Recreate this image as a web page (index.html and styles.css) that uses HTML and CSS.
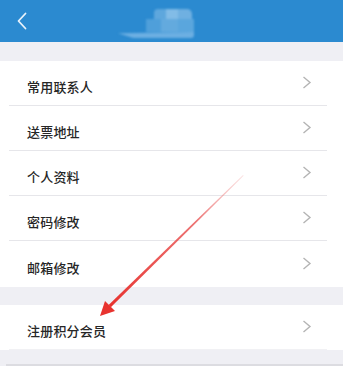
FILE: index.html
```html
<!DOCTYPE html>
<html lang="zh">
<head>
<meta charset="utf-8">
<link rel="stylesheet" href="styles.css">
</head>
<body>
<div class="page">
  <header class="bar">
    <svg class="back" width="12" height="18" viewBox="0 0 12 18"><path d="M9.5 1.5 L2.5 9 L9.5 16.5" fill="none" stroke="#e8f2fb" stroke-width="1.8" stroke-linecap="round" stroke-linejoin="round"/></svg>
    <div class="title-blob">
      <div class="blob-top"><span class="b1"></span><span class="b2"></span><span class="b3"></span></div>
      <div class="blob-mid"><span class="m1"></span><span class="m2"></span><span class="m3"></span></div>
      <div class="blob-base"></div>
    </div>
  </header>

  <div class="group first">
    <div class="row"><span class="label">常用联系人</span><svg class="chev" width="10" height="13" viewBox="0 0 10 13"><path d="M1.5 1 L8 6.5 L1.5 12" fill="none" stroke="#b4b4b4" stroke-width="1.4"/></svg></div>
    <div class="row"><span class="label">送票地址</span><svg class="chev" width="10" height="13" viewBox="0 0 10 13"><path d="M1.5 1 L8 6.5 L1.5 12" fill="none" stroke="#b4b4b4" stroke-width="1.4"/></svg></div>
    <div class="row"><span class="label">个人资料</span><svg class="chev" width="10" height="13" viewBox="0 0 10 13"><path d="M1.5 1 L8 6.5 L1.5 12" fill="none" stroke="#b4b4b4" stroke-width="1.4"/></svg></div>
    <div class="row"><span class="label">密码修改</span><svg class="chev" width="10" height="13" viewBox="0 0 10 13"><path d="M1.5 1 L8 6.5 L1.5 12" fill="none" stroke="#b4b4b4" stroke-width="1.4"/></svg></div>
    <div class="row last"><span class="label">邮箱修改</span><svg class="chev" width="10" height="13" viewBox="0 0 10 13"><path d="M1.5 1 L8 6.5 L1.5 12" fill="none" stroke="#b4b4b4" stroke-width="1.4"/></svg></div>
  </div>

  <div class="group second">
    <div class="row single"><span class="label">注册积分会员</span><svg class="chev" width="10" height="13" viewBox="0 0 10 13"><path d="M1.5 1 L8 6.5 L1.5 12" fill="none" stroke="#b4b4b4" stroke-width="1.4"/></svg></div>
  </div>

  <div class="footer-line"></div>

  <svg class="arrow" width="343" height="366" viewBox="0 0 343 366">
    <defs>
      <linearGradient id="fade" x1="243" y1="175" x2="110" y2="305" gradientUnits="userSpaceOnUse">
        <stop offset="0" stop-color="#f2a0a0" stop-opacity="0.3"/>
        <stop offset="0.35" stop-color="#e85050" stop-opacity="0.8"/>
        <stop offset="1" stop-color="#e8332f"/>
      </linearGradient>
    </defs>
    <polygon points="243,175 243.6,175.8 110.8,307.2 108.6,305" fill="url(#fade)"/>
    <polygon points="100,316 105,301 115,311" fill="#e8332f"/>
  </svg>
</div>
</body>
</html>
```

FILE: styles.css
```css
html, body {
  margin: 0;
  padding: 0;
}
body {
  background: #efeff4;
  font-family: "Noto Sans CJK SC", "Noto Sans", sans-serif;
  width: 343px;
  height: 366px;
  overflow: hidden;
}
.page {
  position: relative;
  width: 343px;
  height: 366px;
}
.bar {
  height: 42px;
  background: #2b8ad0;
  display: flex;
  align-items: center;
  box-sizing: border-box;
  padding-left: 16px;
}
.back {
  display: block;
}
.title-blob {
  margin-left: 89px;
  width: 77px;
  height: 32px;
  margin-top: 8px;
  display: flex;
  flex-direction: column;
  align-items: flex-end;
  filter: blur(0.8px);
}
.blob-top {
  display: flex;
  height: 10px;
  margin-right: 2px;
}
.blob-top span { display: block; height: 10px; }
.blob-top .b1 { width: 12px; background: #5ea7dd; border-top-left-radius: 4px; }
.blob-top .b2 { width: 12px; background: #82bce7; }
.blob-top .b3 { width: 14px; background: #6fb0e1; border-top-right-radius: 5px; }
.blob-mid {
  display: flex;
  height: 13px;
}
.blob-mid span { display: block; height: 13px; }
.blob-mid .m1 { width: 15px; background: #4f9fda; }
.blob-mid .m2 { width: 17px; background: #63aade; }
.blob-mid .m3 { width: 16px; background: #5aa6dd; }
.blob-base {
  width: 76px;
  height: 6px;
  background: #6cafe2;
  border-radius: 0 0 3px 3px;
  clip-path: polygon(0 20%, 100% 0, 100% 100%, 20% 100%);
}
.group {
  background: #fff;
}
.group.first {
  margin-top: 19px;
}
.group.second {
  margin-top: 18px;
}
.row {
  height: 45px;
  display: flex;
  align-items: center;
  justify-content: space-between;
  box-sizing: border-box;
  margin: 0 16px 0 9px;
  border-bottom: 1px solid #e6e6ea;
  padding: 0 15px 0 18px;
}
.row.last {
  border-bottom: none;
  height: 46px;
}
.row.single {
  border-bottom-color: #f1f1f4;
}
.label {
  font-size: 13px;
  font-weight: 500;
  color: #262626;
  padding-top: 7px;
  letter-spacing: 0.2px;
}
.chev {
  display: block;
  margin-top: -1px;
}
.footer-line {
  margin-top: 14px;
  margin-left: 6px;
  height: 2px;
  background: #dcdce1;
}
.arrow {
  position: absolute;
  left: 0;
  top: 0;
  pointer-events: none;
}
```
